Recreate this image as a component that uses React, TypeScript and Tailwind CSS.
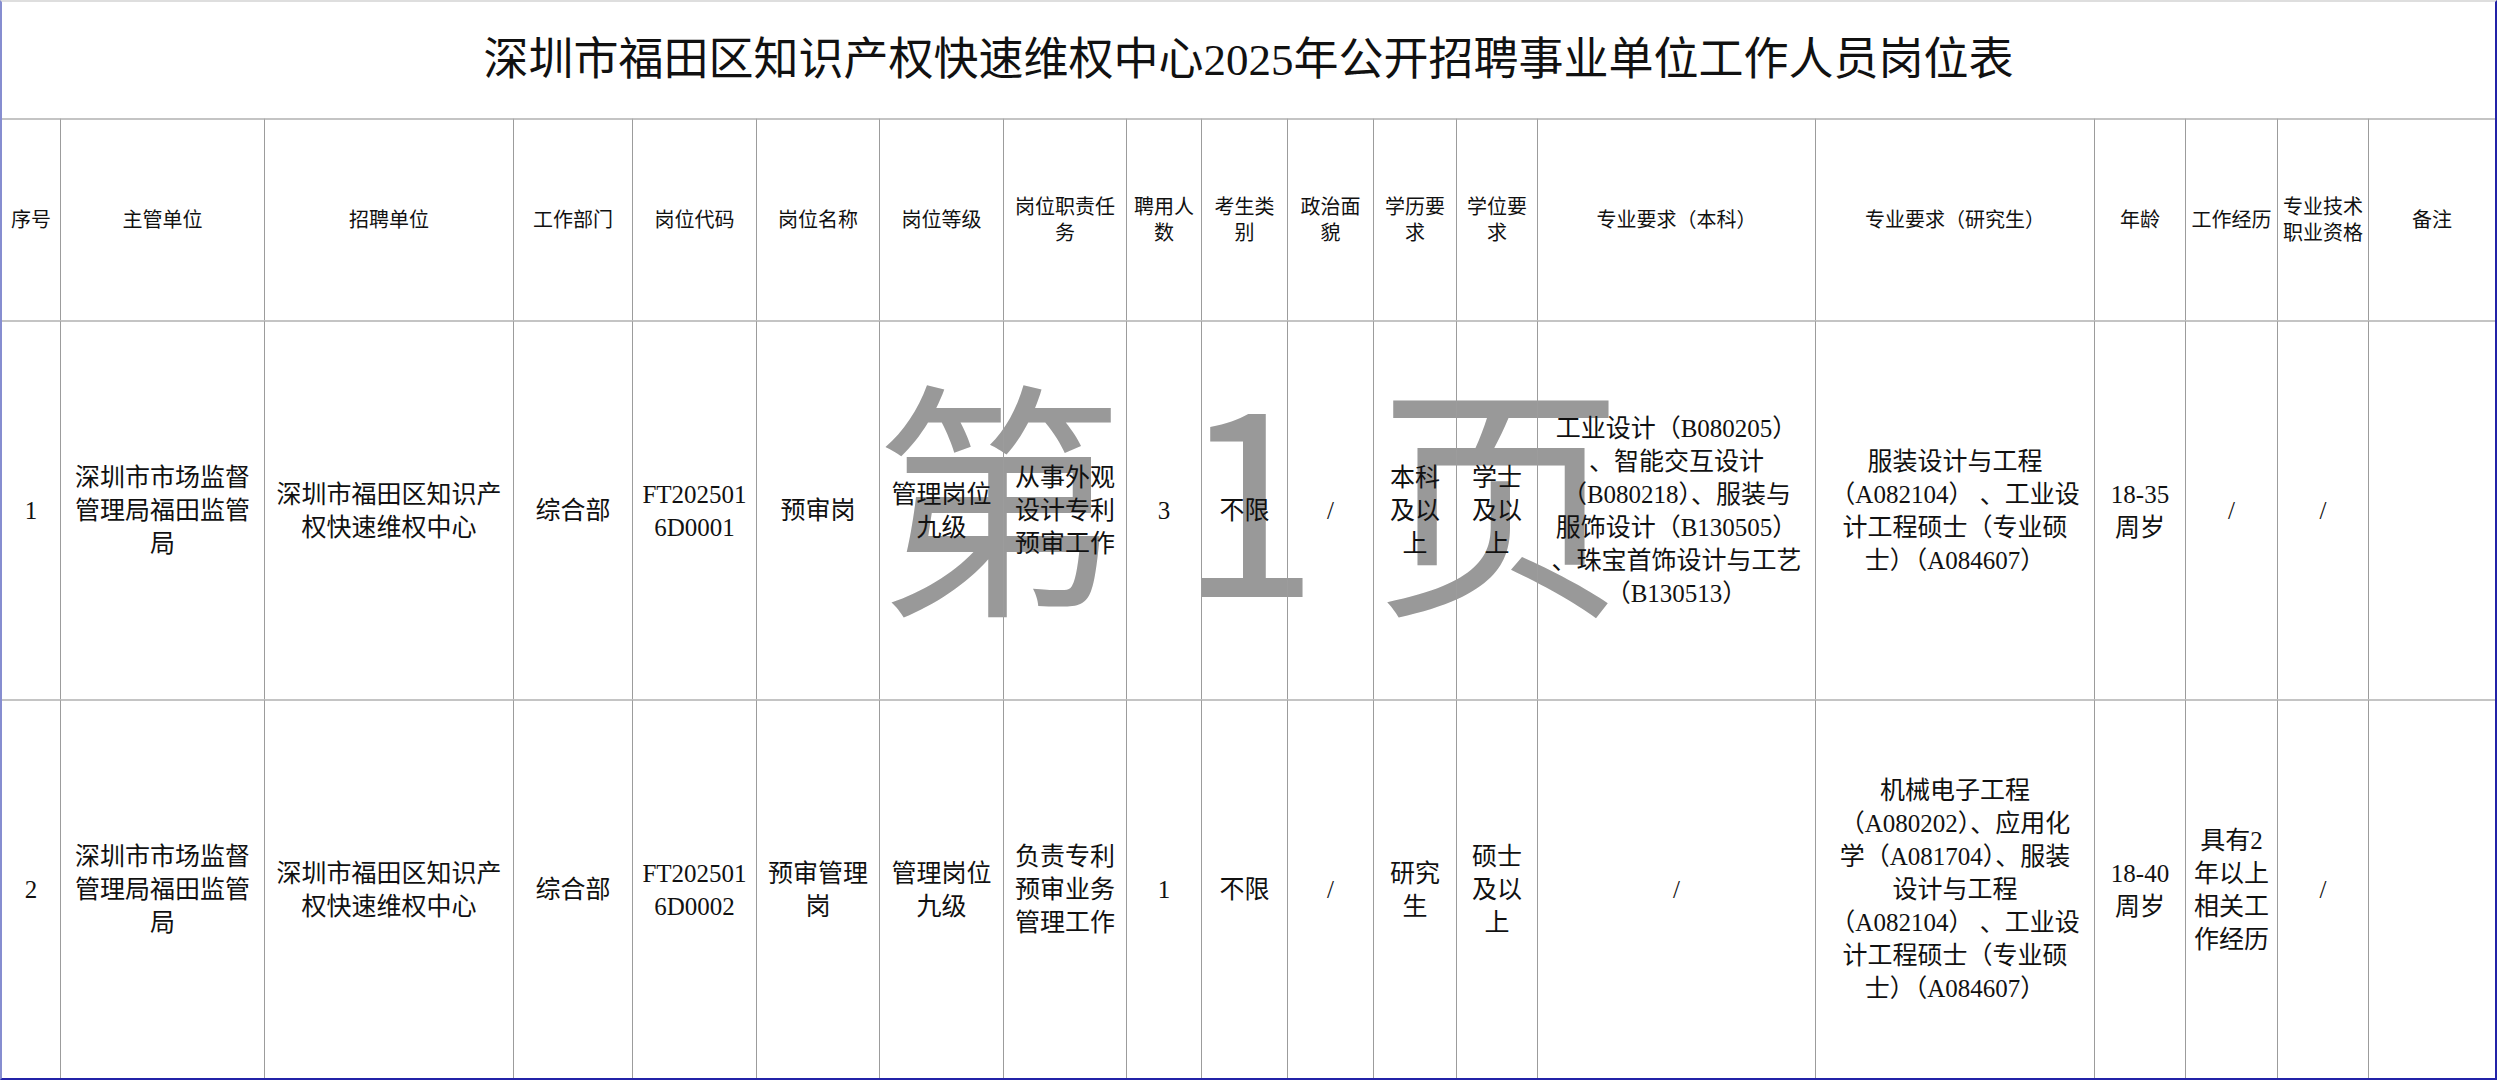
const header: string[][] = [
  ["序号"],
  ["主管单位"],
  ["招聘单位"],
  ["工作部门"],
  ["岗位代码"],
  ["岗位名称"],
  ["岗位等级"],
  ["岗位职责任", "务"],
  ["聘用人", "数"],
  ["考生类", "别"],
  ["政治面", "貌"],
  ["学历要", "求"],
  ["学位要", "求"],
  ["专业要求（本科）"],
  ["专业要求（研究生）"],
  ["年龄"],
  ["工作经历"],
  ["专业技术", "职业资格"],
  ["备注"],
];

const rows: string[][][] = [
  [
    ["1"],
    ["深圳市市场监督", "管理局福田监管", "局"],
    ["深圳市福田区知识产", "权快速维权中心"],
    ["综合部"],
    ["FT202501", "6D0001"],
    ["预审岗"],
    ["管理岗位", "九级"],
    ["从事外观", "设计专利", "预审工作"],
    ["3"],
    ["不限"],
    ["/"],
    ["本科", "及以", "上"],
    ["学士", "及以", "上"],
    [
      "工业设计（B080205）",
      "、智能交互设计",
      "（B080218）、服装与",
      "服饰设计（B130505）",
      "、珠宝首饰设计与工艺",
      "（B130513）",
    ],
    ["服装设计与工程", "（A082104） 、工业设", "计工程硕士（专业硕", "士）（A084607）"],
    ["18-35", "周岁"],
    ["/"],
    ["/"],
    [],
  ],
  [
    ["2"],
    ["深圳市市场监督", "管理局福田监管", "局"],
    ["深圳市福田区知识产", "权快速维权中心"],
    ["综合部"],
    ["FT202501", "6D0002"],
    ["预审管理", "岗"],
    ["管理岗位", "九级"],
    ["负责专利", "预审业务", "管理工作"],
    ["1"],
    ["不限"],
    ["/"],
    ["研究", "生"],
    ["硕士", "及以", "上"],
    ["/"],
    [
      "机械电子工程",
      "（A080202）、应用化",
      "学（A081704）、服装",
      "设计与工程",
      "（A082104） 、工业设",
      "计工程硕士（专业硕",
      "士）（A084607）",
    ],
    ["18-40", "周岁"],
    ["具有2", "年以上", "相关工", "作经历"],
    ["/"],
    [],
  ],
];

function Cell({ lines, col, head }: { lines: string[]; col: number; head?: boolean }) {
  return (
    <div
      className={`flex flex-col items-center justify-center text-center whitespace-nowrap border-t-2 border-t-[#c4c4c4] ${
        col === 0 ? "" : "border-l border-l-[#9c9c9c]"
      } ${head ? "text-[20px] leading-[26px]" : "text-[25px] leading-[33px]"}`}
    >
      {lines.map((l, i) => (
        <span key={i}>{l}</span>
      ))}
    </div>
  );
}

export default function App() {
  return (
    <div className="relative h-[1080px] w-[2497px] overflow-hidden bg-white font-['Liberation_Serif','Noto_Sans_CJK_SC',serif] text-[#111]">
      {/* page watermark, sits under the grid */}
      <div className="pointer-events-none absolute left-[874px] top-[363px] whitespace-pre font-['Noto_Sans_CJK_SC',sans-serif] text-[250px] leading-none text-[#999]">
        第 1 页
      </div>
      <div className="relative grid h-[1080px] grid-cols-[58px_204px_249px_119px_124px_123px_124px_123px_75px_86px_86px_83px_81px_278px_279px_91px_92px_91px_127px] grid-rows-[116px_202px_379px_379px] border-t-2 border-r-2 border-b-2 border-l-2 border-t-[#dedede] border-r-[#2323a8] border-b-[#2323a8] border-l-[#868dd0]">
        <div className="col-span-19 flex items-center justify-center text-[45px] leading-none">
          深圳市福田区知识产权快速维权中心2025年公开招聘事业单位工作人员岗位表
        </div>
        {header.map((h, i) => (
          <Cell key={`h${i}`} lines={h} col={i} head />
        ))}
        {rows.map((r, ri) =>
          r.map((c, i) => <Cell key={`r${ri}-${i}`} lines={c} col={i} />)
        )}
      </div>
    </div>
  );
}
